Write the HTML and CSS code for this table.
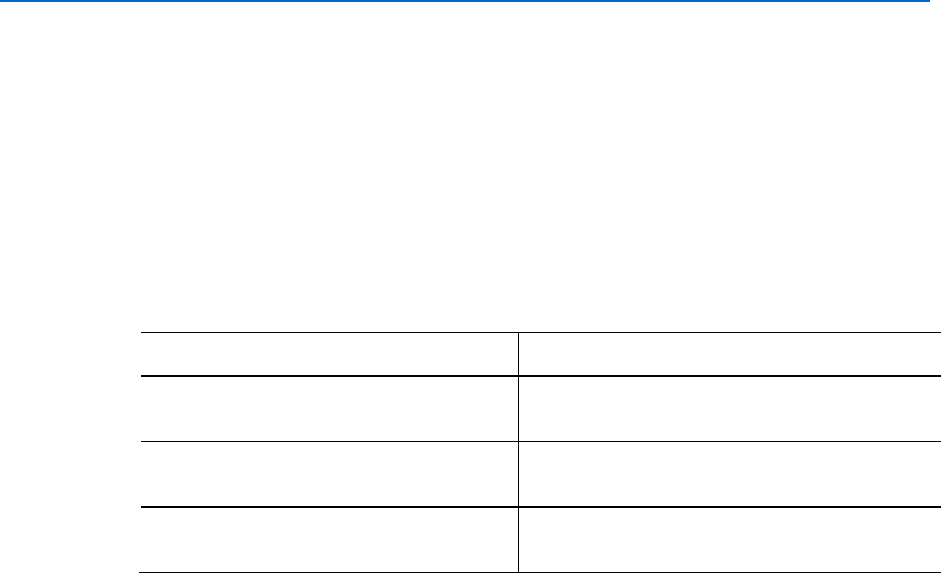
FILE: index.html
```html
<!DOCTYPE html>
<html lang="en">
<head>
    <meta charset="UTF-8">
    <meta name="viewport" content="width=device-width, initial-scale=1.0">
    <title>Table</title>
    <link rel="stylesheet" href="styles.css">
</head>
<body>
    <div class="top-rule"></div>

    <main class="content">
        <table class="spec-table">
            <thead>
                <tr><th></th><th></th></tr>
            </thead>
            <tbody>
                <tr class="row-thin"><td></td><td></td></tr>
                <tr class="row-thick"><td></td><td></td></tr>
                <tr class="row-last"><td></td><td></td></tr>
            </tbody>
        </table>
        <div class="table-end"></div>
    </main>
</body>
</html>
```

FILE: styles.css
```css
body { margin: 0; background: #fff; font-family: 'Liberation Sans', Arial, sans-serif; }

.top-rule { width: 930px; border-top: 2px solid #0066cc; }

.content { padding-top: 330px; }

.spec-table { width: 800px; margin-left: 141px; border-collapse: separate; border-spacing: 0; }
.spec-table th, .spec-table td { padding: 0; border-bottom: 1px solid #000; }
.spec-table th:first-child, .spec-table td:first-child { width: 377px; }
.spec-table th:last-child, .spec-table td:last-child { border-left: 1px solid #000; }

.spec-table thead th { height: 42px; border-top: 1px solid #000; border-bottom: 2px solid #000; }
.spec-table tbody td { height: 64px; }
.spec-table .row-thick td { border-bottom: 2px solid #000; }
.spec-table .row-last td { border-bottom: none; }

.table-end { width: 802px; margin-left: 139px; border-top: 1px solid #000; }
```
